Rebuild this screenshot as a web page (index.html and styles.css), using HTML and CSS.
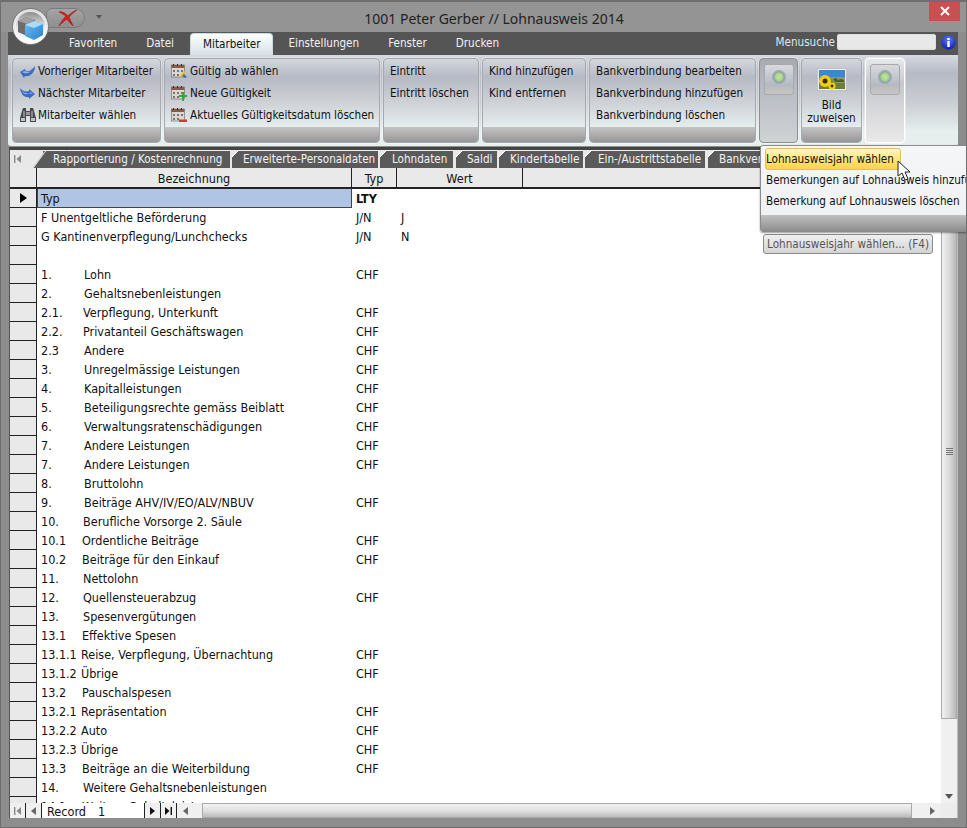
FILE: index.html
```html
<!DOCTYPE html>
<html lang="de">
<head>
<meta charset="utf-8">
<title>1001 Peter Gerber // Lohnausweis 2014</title>
<link rel="stylesheet" href="styles.css">
</head>
<body>
<div class="window">
  <header class="titlebar">
    <div class="qat">
      <svg width="20" height="18" viewBox="0 0 20 18"><path d="M1 3c3-1 6 1 9 4 3-3 6-5 9-6-3 2-6 5-8 7 1 3 3 6 4 9-2-2-5-5-6-7-3 2-5 4-8 7 2-4 4-7 7-10C5 5 3 4 1 3z" fill="#de1c1c" stroke="#a51414" stroke-width=".6"/></svg>
    </div>
    <div class="qat-more"></div>
    <div class="orb">
      <svg width="37" height="37" viewBox="0 0 37 37"><defs><linearGradient id="o" x1="0" y1="0" x2="0" y2="1"><stop offset="0" stop-color="#8d8d8d"/><stop offset=".5" stop-color="#e4e4e4"/><stop offset="1" stop-color="#fff"/></linearGradient><linearGradient id="ring" x1="0" y1="0" x2="0" y2="1"><stop offset="0" stop-color="#ddd"/><stop offset="1" stop-color="#fff"/></linearGradient><linearGradient id="c" x1="0" y1="0" x2="1" y2="1"><stop offset="0" stop-color="#6fbdf0"/><stop offset="1" stop-color="#2a82cc"/></linearGradient></defs><circle cx="18.5" cy="18.5" r="18" fill="url(#ring)" stroke="#666" stroke-width=".8"/><circle cx="18.5" cy="18.5" r="14.5" fill="url(#o)"/><path d="M6 13l8-4 9 3v11l-8 5-9-4z" fill="#6c6c6c"/><path d="M6 13l8-4 9 3-8 4z" fill="#a0a0a0"/><path d="M13 17l9-4 9 3v11l-9 5-9-4z" fill="url(#c)"/><path d="M13 17l9-4 9 3-9 4z" fill="#a9dcf7"/></svg>
    </div>
    <h1 class="title">1001 Peter Gerber // Lohnausweis 2014</h1>
    <button class="close" type="button"><svg width="10" height="10" viewBox="0 0 10 10"><path d="M1 1l8 8M9 1L1 9" stroke="#fff" stroke-width="2"/></svg></button>
  </header>

  <nav class="menubar">
    <span class="mtab">Favoriten</span>
    <span class="mtab">Datei</span>
    <span class="mtab active">Mitarbeiter</span>
    <span class="mtab">Einstellungen</span>
    <span class="mtab">Fenster</span>
    <span class="mtab">Drucken</span>
    <div class="search">
      <span class="search-label">Menusuche</span>
      <span class="search-input"></span>
      <svg width="15" height="15" viewBox="0 0 15 15"><defs><radialGradient id="i" cx=".5" cy=".3" r=".7"><stop offset="0" stop-color="#5c7cff"/><stop offset="1" stop-color="#0a1fb0"/></radialGradient></defs><circle cx="7.5" cy="7.5" r="7.2" fill="url(#i)"/><path d="M6.3 3h2.4v2H6.3zM6.3 6h2.4v6H6.3z" fill="#fff"/></svg>
    </div>
  </nav>

  <section class="ribbon">
    <div class="group g1">
      <div class="items">
        <div class="item"><svg class="ic" width="16" height="13" viewBox="0 0 16 13"><path d="M0 7l5-3 1 2c3 1 6-1 9-5 0 6-4 11-10 10l-1 2z" fill="#3a6cc0"/><path d="M2 7l3-1c3 2 6 1 8-2-2 3-5 5-9 4z" fill="#8fb4e8"/></svg>Vorheriger Mitarbeiter</div>
        <div class="item"><svg class="ic" width="16" height="13" viewBox="0 0 16 13"><path d="M0 1c2 3 6 4 9 3V2l6 5-6 5v-2C5 11 1 8 0 1z" fill="#3a6cc0"/><path d="M2 4c2 2 6 3 8 2v-1l3 2-4-.5C6 8 3 7 2 4z" fill="#8fb4e8"/></svg>Nächster Mitarbeiter</div>
        <div class="item"><svg class="ic" width="16" height="14" viewBox="0 0 16 14"><path d="M3 0h3v3h4V0h3l1 3 2 7v4H10V8H6v6H0v-4l2-7z" fill="#4a4a4a"/><path d="M1 10h4v3H1zM11 10h4v3h-4z" fill="#c4c4c4"/><path d="M3 3h2v6H3zM11 3h2v6h-2z" fill="#8a8a8a"/><path d="M6 4h4v3H6z" fill="#9a9a9a"/></svg>Mitarbeiter wählen</div>
      </div>
      <div class="gfoot"></div>
    </div>
    <div class="group g2">
      <div class="items">
        <div class="item"><svg class="ic" width="16" height="15" viewBox="0 0 16 15"><rect x=".3" y="1" width="13" height="12" fill="#dcd6d0" stroke="#666" stroke-width=".6"/><rect x=".3" y="1" width="13" height="3" fill="#8e5a48"/><path d="M2 0h1v2H2zM6 0h1v2H6zM10 0h1v2h-1z" fill="#333"/><path d="M2 6h2v2H2zM6 6h2v2H6zM10 6h2v2h-2zM2 10h2v2H2zM6 10h2v2H6z" fill="#777"/><path d="M8 13l5-6 2 2-5 5z" fill="#e8c020"/><path d="M11 12l3 2 2-1-3-3z" fill="#3c6fc4"/></svg>Gültig ab wählen</div>
        <div class="item"><svg class="ic" width="16" height="15" viewBox="0 0 16 15"><rect x=".3" y="1" width="13" height="12" fill="#dcd6d0" stroke="#666" stroke-width=".6"/><rect x=".3" y="1" width="13" height="3" fill="#8e5a48"/><path d="M2 0h1v2H2zM6 0h1v2H6zM10 0h1v2h-1z" fill="#333"/><path d="M2 6h2v2H2zM6 6h2v2H6zM10 6h2v2h-2zM2 10h2v2H2zM6 10h2v2H6z" fill="#777"/><path d="M8 9h3V6h2v3h3v2h-3v4h-2v-4H8z" fill="#2fae2f"/></svg>Neue Gültigkeit</div>
        <div class="item"><svg class="ic" width="16" height="15" viewBox="0 0 16 15"><rect x=".3" y="1" width="13" height="12" fill="#dcd6d0" stroke="#666" stroke-width=".6"/><rect x=".3" y="1" width="13" height="3" fill="#8e5a48"/><path d="M2 0h1v2H2zM6 0h1v2H6zM10 0h1v2h-1z" fill="#333"/><path d="M2 6h2v2H2zM6 6h2v2H6zM10 6h2v2h-2zM2 10h2v2H2zM6 10h2v2H6z" fill="#777"/><rect x="8" y="11.5" width="8" height="2.5" fill="#d8343a"/></svg>Aktuelles Gültigkeitsdatum löschen</div>
      </div>
      <div class="gfoot"></div>
    </div>
    <div class="group g3">
      <div class="items">
        <div class="item">Eintritt</div>
        <div class="item">Eintritt löschen</div>
      </div>
      <div class="gfoot"></div>
    </div>
    <div class="group g4">
      <div class="items">
        <div class="item">Kind hinzufügen</div>
        <div class="item">Kind entfernen</div>
      </div>
      <div class="gfoot"></div>
    </div>
    <div class="group g5">
      <div class="items">
        <div class="item">Bankverbindung bearbeiten</div>
        <div class="item">Bankverbindung hinzufügen</div>
        <div class="item">Bankverbindung löschen</div>
      </div>
      <div class="gfoot"></div>
    </div>
    <div class="group g6 pressed">
      <div class="led-btn"><span class="led"></span></div>
    </div>
    <div class="group g7">
      <div class="items center">
        <svg class="photo" width="30" height="23" viewBox="0 0 30 23"><rect width="30" height="23" fill="#ececec" stroke="#999"/><rect x="2" y="2" width="26" height="19" fill="#6f7f3a"/><rect x="2" y="2" width="26" height="7" fill="#3f86d0"/><path d="M13 9h15v6H17z" fill="#8a9a60"/><path d="M16 11l3-1 2 2 3-1 3 1v2h-9z" fill="#4d5f2c"/><circle cx="8" cy="13" r="6" fill="#f2ce10"/><circle cx="8" cy="13" r="2.5" fill="#3a2a10"/><circle cx="15" cy="18" r="3.6" fill="#f2ce10"/><circle cx="15" cy="18" r="1.4" fill="#3a2a10"/></svg>
        <div class="big-label">Bild<br>zuweisen</div>
      </div>
      <div class="gfoot"></div>
    </div>
    <div class="group g8 light">
      <div class="led-btn"><span class="led"></span></div>
    </div>
  </section>

  <section class="sheet">
    <div class="tabs">
      <span class="first-nav"><svg width="7" height="8" viewBox="0 0 7 8"><path d="M0 0h1.4v8H0zM7 0v8L2.5 4z" fill="#888"/></svg></span>
      <span class="tab t1">Rapportierung / Kostenrechnung</span>
      <span class="tab t2">Erweiterte-Personaldaten</span>
      <span class="tab t3">Lohndaten</span>
      <span class="tab t4">Saldi</span>
      <span class="tab t5">Kindertabelle</span>
      <span class="tab t6">Ein-/Austrittstabelle</span>
      <span class="tab t7">Bankverbindung</span>
    </div>
    <div class="gridwrap">
      <div class="grid">
        <div class="row head"><span class="rh"></span><span class="c1">Bezeichnung</span><span class="c2">Typ</span><span class="c3">Wert</span></div>
        <div class="rows">
          <div class="row sel"><span class="rh"><i class="arrow"></i></span><span class="c1">Typ</span><span class="c2 bold">LTY</span><span class="c3"></span></div>
          <div class="row"><span class="rh"></span><span class="c1">F Unentgeltliche Beförderung</span><span class="c2">J/N</span><span class="c3">J</span></div>
          <div class="row"><span class="rh"></span><span class="c1">G Kantinenverpflegung/Lunchchecks</span><span class="c2">J/N</span><span class="c3">N</span></div>
          <div class="row"><span class="rh"></span><span class="c1"></span><span class="c2"></span><span class="c3"></span></div>
          <div class="row"><span class="rh"></span><span class="c1"><b class="n43">1.</b>Lohn</span><span class="c2">CHF</span><span class="c3"></span></div>
          <div class="row"><span class="rh"></span><span class="c1"><b class="n43">2.</b>Gehaltsnebenleistungen</span><span class="c2"></span><span class="c3"></span></div>
          <div class="row"><span class="rh"></span><span class="c1"><b class="n42">2.1.</b>Verpflegung, Unterkunft</span><span class="c2">CHF</span><span class="c3"></span></div>
          <div class="row"><span class="rh"></span><span class="c1"><b class="n42">2.2.</b>Privatanteil Geschäftswagen</span><span class="c2">CHF</span><span class="c3"></span></div>
          <div class="row"><span class="rh"></span><span class="c1"><b class="n43">2.3</b>Andere</span><span class="c2">CHF</span><span class="c3"></span></div>
          <div class="row"><span class="rh"></span><span class="c1"><b class="n43">3.</b>Unregelmässige Leistungen</span><span class="c2">CHF</span><span class="c3"></span></div>
          <div class="row"><span class="rh"></span><span class="c1"><b class="n43">4.</b>Kapitalleistungen</span><span class="c2">CHF</span><span class="c3"></span></div>
          <div class="row"><span class="rh"></span><span class="c1"><b class="n43">5.</b>Beteiligungsrechte gemäss Beiblatt</span><span class="c2">CHF</span><span class="c3"></span></div>
          <div class="row"><span class="rh"></span><span class="c1"><b class="n43">6.</b>Verwaltungsratenschädigungen</span><span class="c2">CHF</span><span class="c3"></span></div>
          <div class="row"><span class="rh"></span><span class="c1"><b class="n43">7.</b>Andere Leistungen</span><span class="c2">CHF</span><span class="c3"></span></div>
          <div class="row"><span class="rh"></span><span class="c1"><b class="n43">7.</b>Andere Leistungen</span><span class="c2">CHF</span><span class="c3"></span></div>
          <div class="row"><span class="rh"></span><span class="c1"><b class="n43">8.</b>Bruttolohn</span><span class="c2"></span><span class="c3"></span></div>
          <div class="row"><span class="rh"></span><span class="c1"><b class="n43">9.</b>Beiträge AHV/IV/EO/ALV/NBUV</span><span class="c2">CHF</span><span class="c3"></span></div>
          <div class="row"><span class="rh"></span><span class="c1"><b class="n42">10.</b>Berufliche Vorsorge 2. Säule</span><span class="c2"></span><span class="c3"></span></div>
          <div class="row"><span class="rh"></span><span class="c1"><b class="n41">10.1</b>Ordentliche Beiträge</span><span class="c2">CHF</span><span class="c3"></span></div>
          <div class="row"><span class="rh"></span><span class="c1"><b class="n41">10.2</b>Beiträge für den Einkauf</span><span class="c2">CHF</span><span class="c3"></span></div>
          <div class="row"><span class="rh"></span><span class="c1"><b class="n42">11.</b>Nettolohn</span><span class="c2"></span><span class="c3"></span></div>
          <div class="row"><span class="rh"></span><span class="c1"><b class="n42">12.</b>Quellensteuerabzug</span><span class="c2">CHF</span><span class="c3"></span></div>
          <div class="row"><span class="rh"></span><span class="c1"><b class="n42">13.</b>Spesenvergütungen</span><span class="c2"></span><span class="c3"></span></div>
          <div class="row"><span class="rh"></span><span class="c1"><b class="n41">13.1</b>Effektive Spesen</span><span class="c2"></span><span class="c3"></span></div>
          <div class="row"><span class="rh"></span><span class="c1"><b class="n40">13.1.1</b>Reise, Verpflegung, Übernachtung</span><span class="c2">CHF</span><span class="c3"></span></div>
          <div class="row"><span class="rh"></span><span class="c1"><b class="n40">13.1.2</b>Übrige</span><span class="c2">CHF</span><span class="c3"></span></div>
          <div class="row"><span class="rh"></span><span class="c1"><b class="n41">13.2</b>Pauschalspesen</span><span class="c2"></span><span class="c3"></span></div>
          <div class="row"><span class="rh"></span><span class="c1"><b class="n40">13.2.1</b>Repräsentation</span><span class="c2">CHF</span><span class="c3"></span></div>
          <div class="row"><span class="rh"></span><span class="c1"><b class="n40">13.2.2</b>Auto</span><span class="c2">CHF</span><span class="c3"></span></div>
          <div class="row"><span class="rh"></span><span class="c1"><b class="n40">13.2.3</b>Übrige</span><span class="c2">CHF</span><span class="c3"></span></div>
          <div class="row"><span class="rh"></span><span class="c1"><b class="n41">13.3</b>Beiträge an die Weiterbildung</span><span class="c2">CHF</span><span class="c3"></span></div>
          <div class="row"><span class="rh"></span><span class="c1"><b class="n42">14.</b>Weitere Gehaltsnebenleistungen</span><span class="c2"></span><span class="c3"></span></div>
          <div class="row"><span class="rh"></span><span class="c1"><b class="n41">14.1</b>Weitere Gehaltsleistungen</span><span class="c2"></span><span class="c3"></span></div>
        </div>
      </div>
      <div class="vscroll">
        <div class="vup"></div>
        <div class="vthumb"><span class="grip"></span></div>
        <div class="vtrack"><i class="tri-down"></i></div>
      </div>
    </div>
    <div class="navbar">
      <span class="nb first"><svg width="7" height="8" viewBox="0 0 7 8"><path d="M0 0h1.4v8H0zM7 0v8L2.5 4z" fill="#888"/></svg></span>
      <span class="nb"><i class="tri-left"></i></span>
      <span class="rec">Record</span>
      <span class="recno">1</span>
      <span class="nb"><i class="tri-right"></i></span>
      <span class="nb"><svg width="7" height="8" viewBox="0 0 7 8"><path d="M7 0H5.6v8H7zM0 0v8l4.5-4z" fill="#111"/></svg></span>
      <span class="hleft"><i class="tri-left"></i></span>
      <span class="hthumb"></span>
      <span class="hright"><i class="tri-right grey"></i></span>
      <span class="corner"></span>
    </div>
  </section>

  <div class="popup">
    <div class="pop-item hot">Lohnausweisjahr wählen</div>
    <div class="pop-item">Bemerkungen auf Lohnausweis hinzufügen</div>
    <div class="pop-item">Bemerkung auf Lohnausweis löschen</div>
    <div class="pop-foot"></div>
  </div>
  <div class="tip-btn">Lohnausweisjahr wählen... (F4)</div>
  <svg class="cursor" width="14" height="21" viewBox="0 0 14 21"><path d="M1 1v15l4-3 3 7 3-1-3-7h5z" fill="#fff" stroke="#222" stroke-width="1"/></svg>
</div>
</body>
</html>
```

FILE: styles.css
```css
* { box-sizing: border-box; }
html, body { margin: 0; padding: 0; }
body { width: 967px; height: 828px; overflow: hidden; background: #fff; font-family: "DejaVu Sans Condensed", "DejaVu Sans", sans-serif; font-size: 11.6px; color: #111; }

.window { position: relative; width: 967px; height: 828px; display: flex; flex-direction: column; background: #8d8d8d; border: 1px solid #6e6e6e; border-top-width: 2px; overflow: hidden; }

/* title bar */
.titlebar { height: 30px; flex: none; display: flex; justify-content: center; align-items: center; position: relative; background: #949494; }
.title { margin: 0 0 0 21px; font: 400 14px "Noto Sans", sans-serif; color: #222; padding-top: 2px; }
.orb { position: absolute; left: 11px; top: 6px; width: 37px; height: 37px; z-index: 3; }
.qat { position: absolute; left: 45px; top: 6px; width: 39px; height: 20px; border: 1px solid #7c7c7c; border-radius: 6px 10px 10px 0; background: linear-gradient(#a4a4a4, #8e8e8e); padding: 0 0 0 11px; }
.qat-more { position: absolute; left: 95px; top: 13px; width: 0; height: 0; border: 3px solid transparent; border-top: 4px solid #555; }
.close { position: absolute; right: 6px; top: -2px; width: 31px; height: 21px; padding: 0; border: 0; background: #c75050; display: flex; align-items: center; justify-content: center; }

/* menu */
.menubar { height: 23px; flex: none; margin: 0 8px 0 7px; background: #555; display: flex; align-items: flex-end; padding-left: 48px; gap: 3px; position: relative; }
.mtab { height: 22px; padding: 3px 13px 0; color: #f2f2f2; white-space: nowrap; }
.mtab.active { background: linear-gradient(#fdfefe, #d7e1e8); color: #111; border: 1px solid #c8dde6; border-bottom: 0; border-radius: 4px 4px 0 0; padding: 3px 12px 0; margin-right: -1px; }
.search { position: absolute; right: 2px; top: 2px; display: flex; align-items: center; gap: 2px; color: #dbe8f2; }
.search-input { width: 99px; height: 16px; background: #e8e8e8; border: 1px solid #ddd; border-radius: 2px; margin-right: 3px; }

/* ribbon */
.ribbon { height: 91px; flex: none; margin: 0 8px 0 7px; padding: 3px 0 2px 4px; display: flex; gap: 3px; background: linear-gradient(#d6d9df 0, #b6bac5 20%, #c8cbd1 50%, #e6eeee 85%); border-radius: 0 0 3px 3px; border-bottom: 1px solid #eee; }
.group { display: flex; flex-direction: column; height: 85px; border: 1px solid #a5a9ad; border-radius: 4px; outline: 1px solid rgba(255,255,255,.35); background: linear-gradient(#d4d7dd 0, #b6bac5 18px, #c9ccd2 38px, #e5eded 68px); overflow: hidden; }
.items { height: 68px; padding: 1px 0 0 6px; flex: none; }
.item { height: 22px; display: flex; align-items: center; white-space: nowrap; }
.ic { flex: none; margin-right: 3px; }
.g1 { width: 149px; } .g1 .items { padding-left: 7px; } .g1 .ic { margin-right: 2px; }
.g2 { width: 216px; } .g3 { width: 96px; } .g4 { width: 104px; } .g5 { width: 167px; }
.g6 { width: 39px; } .g7 { width: 61px; } .g8 { width: 40px; }
.gfoot { flex: 1; background: linear-gradient(#c4c4c4, #969696); }
.items.center { padding: 9px 0 0; text-align: center; }
.photo { display: block; margin: 0 auto; }
.big-label { line-height: 13px; margin-top: 8px; font-size: 11.6px; }
.pressed { background: linear-gradient(#a9aab0, #b5b9c3 30%, #d0d3d4 100%); border-color: #8e8e8e; }
.light { background: linear-gradient(#e8e8ea, #c4c7cf 30%, #dcdcde 70%, #e9e9e9); border-color: #fff; }
.led-btn { width: 30px; height: 31px; margin: 5px auto 0; border: 1px solid #a9a9ad; border-radius: 3px; background: linear-gradient(#d8dadf 0, #b4b8c2 21px, #bdbdbd 22px, #c6c6c6); display: flex; justify-content: center; padding-top: 5px; }
.led { width: 14px; height: 14px; border-radius: 50%; background: radial-gradient(circle at 50% 50%, #c8e6a0 0, #a6d382 45%, #8fa5ad 60%, #c4ccd4 100%); border: 1px solid #9aa6ae; }

/* sheet */
.sheet { flex: 1; min-height: 0; margin: 1px 8px 9px; background: #fff; display: flex; flex-direction: column; border-top: 3px solid #444; border-left: 1px solid #555; border-right: 1px solid #bbb; }
.tabs { height: 18px; flex: none; display: flex; align-items: stretch; background: #e8e8e8; overflow: hidden; white-space: nowrap; padding-left: 1px; }
.first-nav { width: 21px; flex: none; display: flex; align-items: center; padding-left: 3px; }
.tab { position: relative; display: block; flex: none; background: #5a5a5a; color: #f2f2f2; border-top: 1px solid #f0f0f0; margin-left: 2px; padding-top: 1px; line-height: 15px; }
.tab::before { content: ""; position: absolute; left: 0; top: -1px; width: 10px; height: 9px; background: linear-gradient(135deg, #e8e8e8 0 32%, #fff 32% 42%, transparent 42%); }
.t1 { width: 187px; margin-left: 11px; padding-left: 10px; z-index: 1; }
.t1::before { left: -11px; width: 20px; height: 18px; background: #5a5a5a; border-left: 1px solid #f0f0f0; border-top: 1px solid #f0f0f0; transform: skewX(-36deg); transform-origin: bottom left; z-index: -1; }
.t2 { width: 146px; padding-left: 11px; }
.t3 { width: 73px; padding-left: 12px; }
.t4 { width: 41px; padding-left: 11px; margin-left: 3px; }
.t5 { width: 84px; padding-left: 11px; }
.t6 { width: 120px; padding-left: 13px; }
.t7 { width: 120px; padding-left: 11px; margin-left: 3px; }

.gridwrap { flex: 1; min-height: 0; display: flex; }
.grid { flex: 1; min-width: 0; display: flex; flex-direction: column; font-size: 12.5px; }
.rows { flex: 1; min-height: 0; overflow: hidden; }
.row { height: 19px; flex: none; display: flex; align-items: stretch; white-space: nowrap; line-height: 20px; }
.rh { width: 27px; flex: none; background: #e9e9e9; border-right: 1px solid #222; border-bottom: 1px solid #222; position: relative; }
.c1 { width: 315px; flex: none; padding-left: 4px; }
.c2 { width: 45px; flex: none; padding-left: 4px; }
.c3 { width: 126px; flex: none; padding-left: 4px; }
.c1 b { display: inline-block; font-weight: 400; }
.n43 { width: 43px; } .n42 { width: 42px; } .n41 { width: 41px; } .n40 { width: 40px; }
.bold { font-weight: 700; }
.head { height: 21px; background: #e9e9e9; border-bottom: 2px solid #222; line-height: 21px; }
.head .rh { border-bottom: 0; }
.head .c1, .head .c2, .head .c3 { text-align: center; border-right: 1px solid #222; padding: 0; }
.sel .c1 { background: #b0c4e4; border: 1px solid #444; border-top: 0; padding-left: 3px; }
.arrow { position: absolute; left: 10px; top: 4px; width: 0; height: 0; border: 5px solid transparent; border-left: 7px solid #000; border-right: 0; }

.vscroll { width: 16px; flex: none; display: flex; flex-direction: column; background: #f0f0f0; }
.vup { height: 15px; flex: none; }
.vthumb { height: 536px; flex: none; background: linear-gradient(90deg, #f2f2f2, #d8d8d8 55%, #b8b8b8); border: 1px solid #aaa; display: flex; align-items: center; justify-content: center; }
.grip { width: 7px; height: 7px; background: repeating-linear-gradient(#777 0 1px, transparent 1px 2px); }
.vtrack { flex: 1; display: flex; align-items: flex-end; justify-content: center; padding-bottom: 4px; }
.tri-down { width: 0; height: 0; border: 4px solid transparent; border-top: 5px solid #555; border-bottom: 0; }

.navbar { height: 15px; flex: none; display: flex; align-items: stretch; background: #f0f0f0; line-height: 17px; font-size: 12.6px; }
.nb { width: 16px; display: flex; align-items: center; justify-content: center; background: #f0f0f0; border-right: 1px solid #222; flex: none; }
.rec { width: 45px; background: #fff; padding-left: 5px; flex: none; }
.recno { width: 58px; background: #fff; padding-left: 11px; border-right: 1px solid #222; flex: none; }
.tri-left { width: 0; height: 0; border: 4px solid transparent; border-right: 5px solid #666; border-left: 0; }
.tri-right { width: 0; height: 0; border: 4px solid transparent; border-left: 5px solid #111; border-right: 0; }
.tri-right.grey { border-left-color: #666; }
.hleft { width: 25px; display: flex; align-items: center; justify-content: center; flex: none; padding-right: 8px; }
.hthumb { width: 710px; flex: none; background: linear-gradient(#f2f2f2, #e0e0e0 50%, #bcbcbc); border: 1px solid #aaa; }
.hright { width: 29px; display: flex; align-items: center; justify-content: center; flex: none; padding-left: 11px; }
.corner { flex: 1; background: #ececec; }

/* popup */
.popup { position: absolute; left: 759px; top: 143px; width: 220px; height: 87px; background: linear-gradient(#f5f6f8, #eef0f2); border: 1px solid #8a8a8a; border-radius: 3px; padding: 2px 0 0 4px; box-shadow: 0 1px 2px rgba(0,0,0,.4); z-index: 4; }
.pop-item { height: 21.5px; line-height: 21px; padding-left: 1px; white-space: nowrap; }
.hot { width: 136px; border: 1px solid #e0c060; border-radius: 3px; padding-left: 0; background: linear-gradient(#fff5c8, #ffe47a 55%, #ffd24a); }
.pop-foot { position: absolute; left: 0; right: 0; bottom: 0; height: 16px; background: linear-gradient(#c0c0c0, #8e8e8e); }
.tip-btn { position: absolute; left: 762px; top: 232px; width: 170px; height: 20px; border: 1px solid #8a8a8a; border-radius: 3px; background: linear-gradient(#f0f0f0, #d4d4d4); color: #555; text-align: center; line-height: 18px; z-index: 3; }
.cursor { position: absolute; left: 896px; top: 158px; z-index: 5; }
```
